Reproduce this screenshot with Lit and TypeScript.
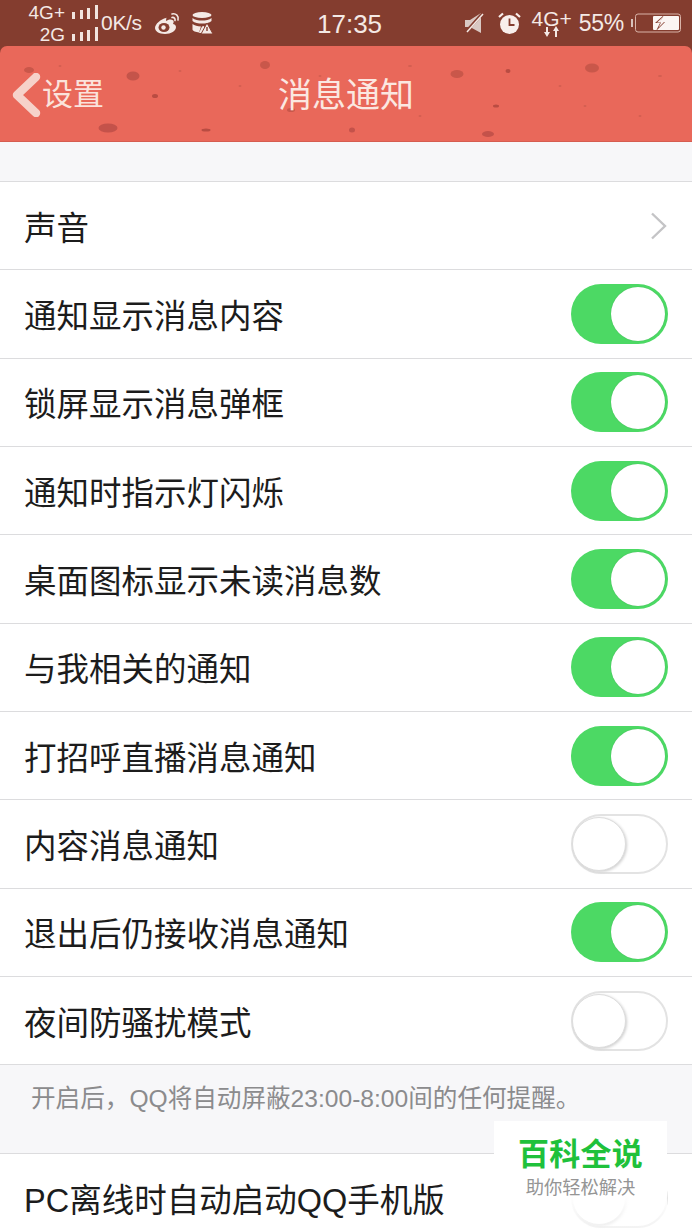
import { LitElement, html, css, svg } from "lit";
import { customElement } from "lit/decorators.js";

const ROWS: { t: string; on: boolean }[] = [
  { t: "通知显示消息内容", on: true },
  { t: "锁屏显示消息弹框", on: true },
  { t: "通知时指示灯闪烁", on: true },
  { t: "桌面图标显示未读消息数", on: true },
  { t: "与我相关的通知", on: true },
  { t: "打招呼直播消息通知", on: true },
  { t: "内容消息通知", on: false },
  { t: "退出后仍接收消息通知", on: true },
  { t: "夜间防骚扰模式", on: false },
];

// x, y, rx, ry, colour of the speckles on the nav texture
const SPOTS: [number, number, number, number, string][] = [
  [29, 24, 5, 3, "#c9574a"], [133, 30, 6.5, 4.5, "#c4544a"], [155, 50, 3, 2, "#b94c42"],
  [108, 82, 9.5, 4.5, "#c4524a"], [206, 84, 4.5, 1.5, "#b94c42"], [265, 19, 5, 4, "#c9574a"],
  [291, 64, 4, 2, "#c9574a"], [457, 28, 6.5, 4, "#c9574a"], [508, 25, 2.5, 2, "#b94c42"],
  [592, 22, 7, 4.5, "#c9574a"], [496, 60, 3, 1.5, "#b94c42"], [352, 84, 3, 2.5, "#c4524a"],
  [488, 88, 6, 3, "#c4524a"], [60, 20, 1.5, 1, "#d25f51"], [180, 25, 1.5, 1, "#d25f51"],
  [240, 40, 1.5, 1, "#d25f51"], [410, 20, 2, 1, "#d25f51"], [560, 40, 1.5, 1, "#d25f51"],
  [640, 70, 1.5, 1, "#d25f51"], [660, 30, 2, 1, "#d25f51"], [80, 60, 1.5, 1, "#d25f51"],
  [320, 30, 1.5, 1, "#d25f51"], [585, 60, 1.5, 1, "#d25f51"], [420, 70, 1.5, 1, "#d25f51"],
];

const bars = html`<svg class="bars" width="26" height="14" viewBox="0 0 26 14">
  <rect x="0" y="7" width="3" height="7" fill="#f1e4df"></rect>
  <rect x="8" y="5" width="3" height="9" fill="#f1e4df"></rect>
  <rect x="15" y="3" width="3" height="11" fill="#f1e4df"></rect>
  <rect x="23" y="0" width="3" height="14" fill="#f1e4df"></rect>
</svg>`;

@customElement("app-root")
export class AppRoot extends LitElement {
  static styles = css`
    :host {
      display: block;
      width: 692px;
      height: 1230px;
      overflow: hidden;
      position: relative;
      background: #f7f7f9;
      font-family: "Liberation Sans", "Noto Sans CJK SC", sans-serif;
    }
    .status {
      height: 46px;
      background: #843d2f;
      color: #f4e9e5;
      display: flex;
      align-items: center;
      position: relative;
    }
    .signal {
      width: 87px;
      margin-left: 11px;
      display: flex;
      flex-direction: column;
      font-size: 19px;
      line-height: 21px;
      flex: none;
    }
    .sig-row {
      display: flex;
      justify-content: flex-end;
      align-items: center;
      gap: 7px;
      height: 22px;
    }
    .speed {
      font-size: 21px;
      margin-left: 3px;
      letter-spacing: -0.3px;
      width: 52px;
    }
    .st-icons { display: flex; align-items: center; gap: 9px; margin-left: 1px; }
    .time {
      position: absolute;
      left: 317px;
      top: 9px;
      font-size: 26px;
      line-height: 30px;
    }
    .st-right {
      margin-left: auto;
      margin-right: 11px;
      display: flex;
      align-items: center;
    }
    .net { display: flex; flex-direction: column; align-items: center; font-size: 21px; line-height: 20px; margin: 0 7px 0 11px; }
    .pct { font-size: 23px; margin-right: 7px; letter-spacing: -0.3px; }
    .nav {
      height: 96px;
      background: #e9685a;
      border-radius: 7px 7px 0 0;
      display: flex;
      align-items: center;
      justify-content: center;
      position: relative;
      box-sizing: border-box;
      border-bottom: 1px solid #d65d50;
    }
    .navtop { background: #843d2f; }
    .tex { position: absolute; left: 0; top: 0; }
    .back {
      position: absolute;
      left: 12px;
      top: 27px;
      display: flex;
      align-items: center;
      color: #fbe3dc;
      font-size: 31px;
      line-height: 44px;
    }
    .back svg { margin-right: 1px; }
    .title {
      color: #fbe7e1;
      font-size: 34px;
      position: relative;
      line-height: 44px;
      top: 1px;
    }
    .gap { height: 39px; }
    .list { background: #fff; border-top: 1px solid #dcdcde; }
    .row {
      height: 88.33px;
      box-sizing: border-box;
      border-bottom: 1px solid #dcdcde;
      background: #fff;
      display: flex;
      align-items: center;
      justify-content: space-between;
      padding: 0 24px;
      font-size: 32.5px;
      color: #1c1c1c;
    }
    .row span { position: relative; top: -0.5px; white-space: nowrap; }
    .toggle {
      width: 97px;
      height: 60px;
      box-sizing: border-box;
      border-radius: 30px;
      position: relative;
      flex: none;
    }
    .toggle.on { background: #4cd964; }
    .toggle.off { background: #fff; border: 2px solid #e3e3e3; }
    .knob {
      position: absolute;
      width: 54px;
      height: 54px;
      border-radius: 50%;
      background: #fff;
      box-sizing: border-box;
    }
    .toggle.on .knob { right: 3px; top: 3px; box-shadow: 0 0 1px #3aa850; }
    .toggle.off .knob { left: -1px; top: 1px; border: 1px solid #ddd; box-shadow: 1px 1px 3px #cfcfcf; }
    .chev { margin-right: 1px; }
    .note {
      height: 88px;
      box-sizing: border-box;
      padding: 16px 31px 0;
      font-size: 24.6px;
      line-height: 36px;
      color: #8b8b8d;
      background: #f7f7f9;
      white-space: nowrap;
    }
    .list2 { border-top: 1px solid #dcdcde; background: #fff; }
    .mark {
      position: absolute;
      left: 494px;
      top: 1121px;
      width: 173px;
      height: 109px;
      box-sizing: border-box;
      padding-top: 14px;
      background: linear-gradient(#fff 68%, rgba(255, 255, 255, 0.55));
      text-align: center;
      border-radius: 0 0 10px 0;
    }
    .m1 { font-size: 31px; font-weight: 700; line-height: 40px; color: #1fc13b; letter-spacing: 0.3px; }
    .m2 { font-size: 18.3px; line-height: 24px; color: #959595; margin-top: 1px; }
  `;

  private toggle(on: boolean) {
    return html`<div class="toggle ${on ? "on" : "off"}"><div class="knob"></div></div>`;
  }

  render() {
    return html`
      <div class="status">
        <div class="signal">
          <div class="sig-row">4G+ ${bars}</div>
          <div class="sig-row">2G ${bars}</div>
        </div>
        <div class="speed">0K/s</div>
        <div class="st-icons">
          <svg width="28" height="24" viewBox="0 0 28 24">
            <path d="M12 7c-5 1-11 6-11 10 0 3 4 6 10 6s11-3 11-7c0-2-2-3-3-3 1-2 1-4-1-4-2-1-4 0-6 1 0-2 1-4 0-3z" fill="#f4e9e5"></path>
            <ellipse cx="10" cy="16.5" rx="5.5" ry="4.5" fill="#843d2f"></ellipse>
            <circle cx="9.5" cy="16.5" r="2.2" fill="#f4e9e5"></circle>
            <path d="M18 3c4-1 7 2 6 6M18 6.5c2-.5 3.5 1 3 3" fill="none" stroke="#f4e9e5" stroke-width="1.6" stroke-linecap="round"></path>
          </svg>
          <svg width="22" height="24" viewBox="0 0 22 24">
            <ellipse cx="11" cy="4" rx="9.5" ry="3" fill="#f4e9e5"></ellipse>
            <path d="M1.5 7c2 2 6 2.5 9.5 2.5S18.500 9 20.500 7v3c-2 2-6 2.500-9.500 2.500S3.500 12 1.500 10zM1.500 13c2 1.500 5 2.500 8.500 2.500l-2 6c-3-.5-6.500-1.500-6.500-3zM11 15.500l2-.5 1 7H8z" fill="#f4e9e5"></path>
            <path d="M16 12l6 11H10z" fill="#f4e9e5" stroke="#843d2f" stroke-width="1"></path>
            <rect x="15.300" y="16" width="1.400" height="4" fill="#843d2f"></rect>
          </svg>
        </div>
        <div class="time">17:35</div>
        <div class="st-right">
          <svg width="20" height="22" viewBox="0 0 20 22">
            <path d="M1 8h5l11-7v20L6 15H1z" fill="#d9c8c3"></path>
            <path d="M1 21L18 2" stroke="#843d2f" stroke-width="3"></path>
            <path d="M3 20L19 2" stroke="#f4e9e5" stroke-width="1.500"></path>
          </svg>
          <svg width="23" height="23" viewBox="0 0 23 23" style="margin-left:14px">
            <circle cx="11.500" cy="12.500" r="9.500" fill="#f8efec"></circle>
            <path d="M11.500 6.500v6.500h5" fill="none" stroke="#843d2f" stroke-width="1.800"></path>
            <path d="M1 5l4-3.500M22 5l-4-3.500" stroke="#f8efec" stroke-width="2.200"></path>
          </svg>
          <div class="net">
            <span>4G+</span>
            <svg width="16" height="11" viewBox="0 0 16 11" style="margin-top:-3px">
              <path d="M3 11L0 6h2V1h2v5h2zM12 0l3 5h-2v6h-2V5H9z" fill="#f4e9e5"></path>
            </svg>
          </div>
          <div class="pct">55%</div>
          <svg width="50" height="20" viewBox="0 0 50 20">
            <rect x="0" y="6" width="2" height="8" fill="#d8c2bb"></rect>
            <rect x="4.500" y="1" width="45" height="18" rx="2.500" fill="none" stroke="#d8b3a8"></rect>
            <rect x="22" y="3" width="26" height="14" rx="1" fill="#fbf5f3"></rect>
            <path d="M33 2l-9 8h5l-4 8 9-9h-5l4-7z" fill="#843d2f"></path>
            <path d="M32 4l-6 5.500h4l-2.500 5 6-6h-4z" fill="#fbf5f3"></path>
          </svg>
        </div>
      </div>
      <div class="navtop">
        <div class="nav">
          <svg class="tex" width="692" height="96" viewBox="0 0 692 96">
            ${SPOTS.map(([x, y, rx, ry, c]) => svg`<ellipse cx=${x} cy=${y} rx=${rx} ry=${ry} fill=${c}></ellipse>`)}
          </svg>
          <div class="back">
            <svg width="29" height="44" viewBox="0 0 29 44">
              <path d="M24 4L5 22l19 18" fill="none" stroke="#f6d2ca" stroke-width="8.500" stroke-linecap="round" stroke-linejoin="round"></path>
            </svg>
            设置
          </div>
          <div class="title">消息通知</div>
        </div>
      </div>
      <div class="gap"></div>
      <div class="list">
        <div class="row">
          <span>声音</span>
          <svg class="chev" width="17" height="28" viewBox="0 0 17 28">
            <path d="M2 1.500L15 14 2 26.500" fill="none" stroke="#c4c4c6" stroke-width="2.400"></path>
          </svg>
        </div>
        ${ROWS.map((r) => html`<div class="row"><span>${r.t}</span>${this.toggle(r.on)}</div>`)}
      </div>
      <div class="note">开启后，QQ将自动屏蔽23:00-8:00间的任何提醒。</div>
      <div class="list2">
        <div class="row"><span>PC离线时自动启动QQ手机版</span>${this.toggle(false)}</div>
      </div>
      <div class="mark">
        <div class="m1">百科全说</div>
        <div class="m2">助你轻松解决</div>
      </div>
    `;
  }
}
